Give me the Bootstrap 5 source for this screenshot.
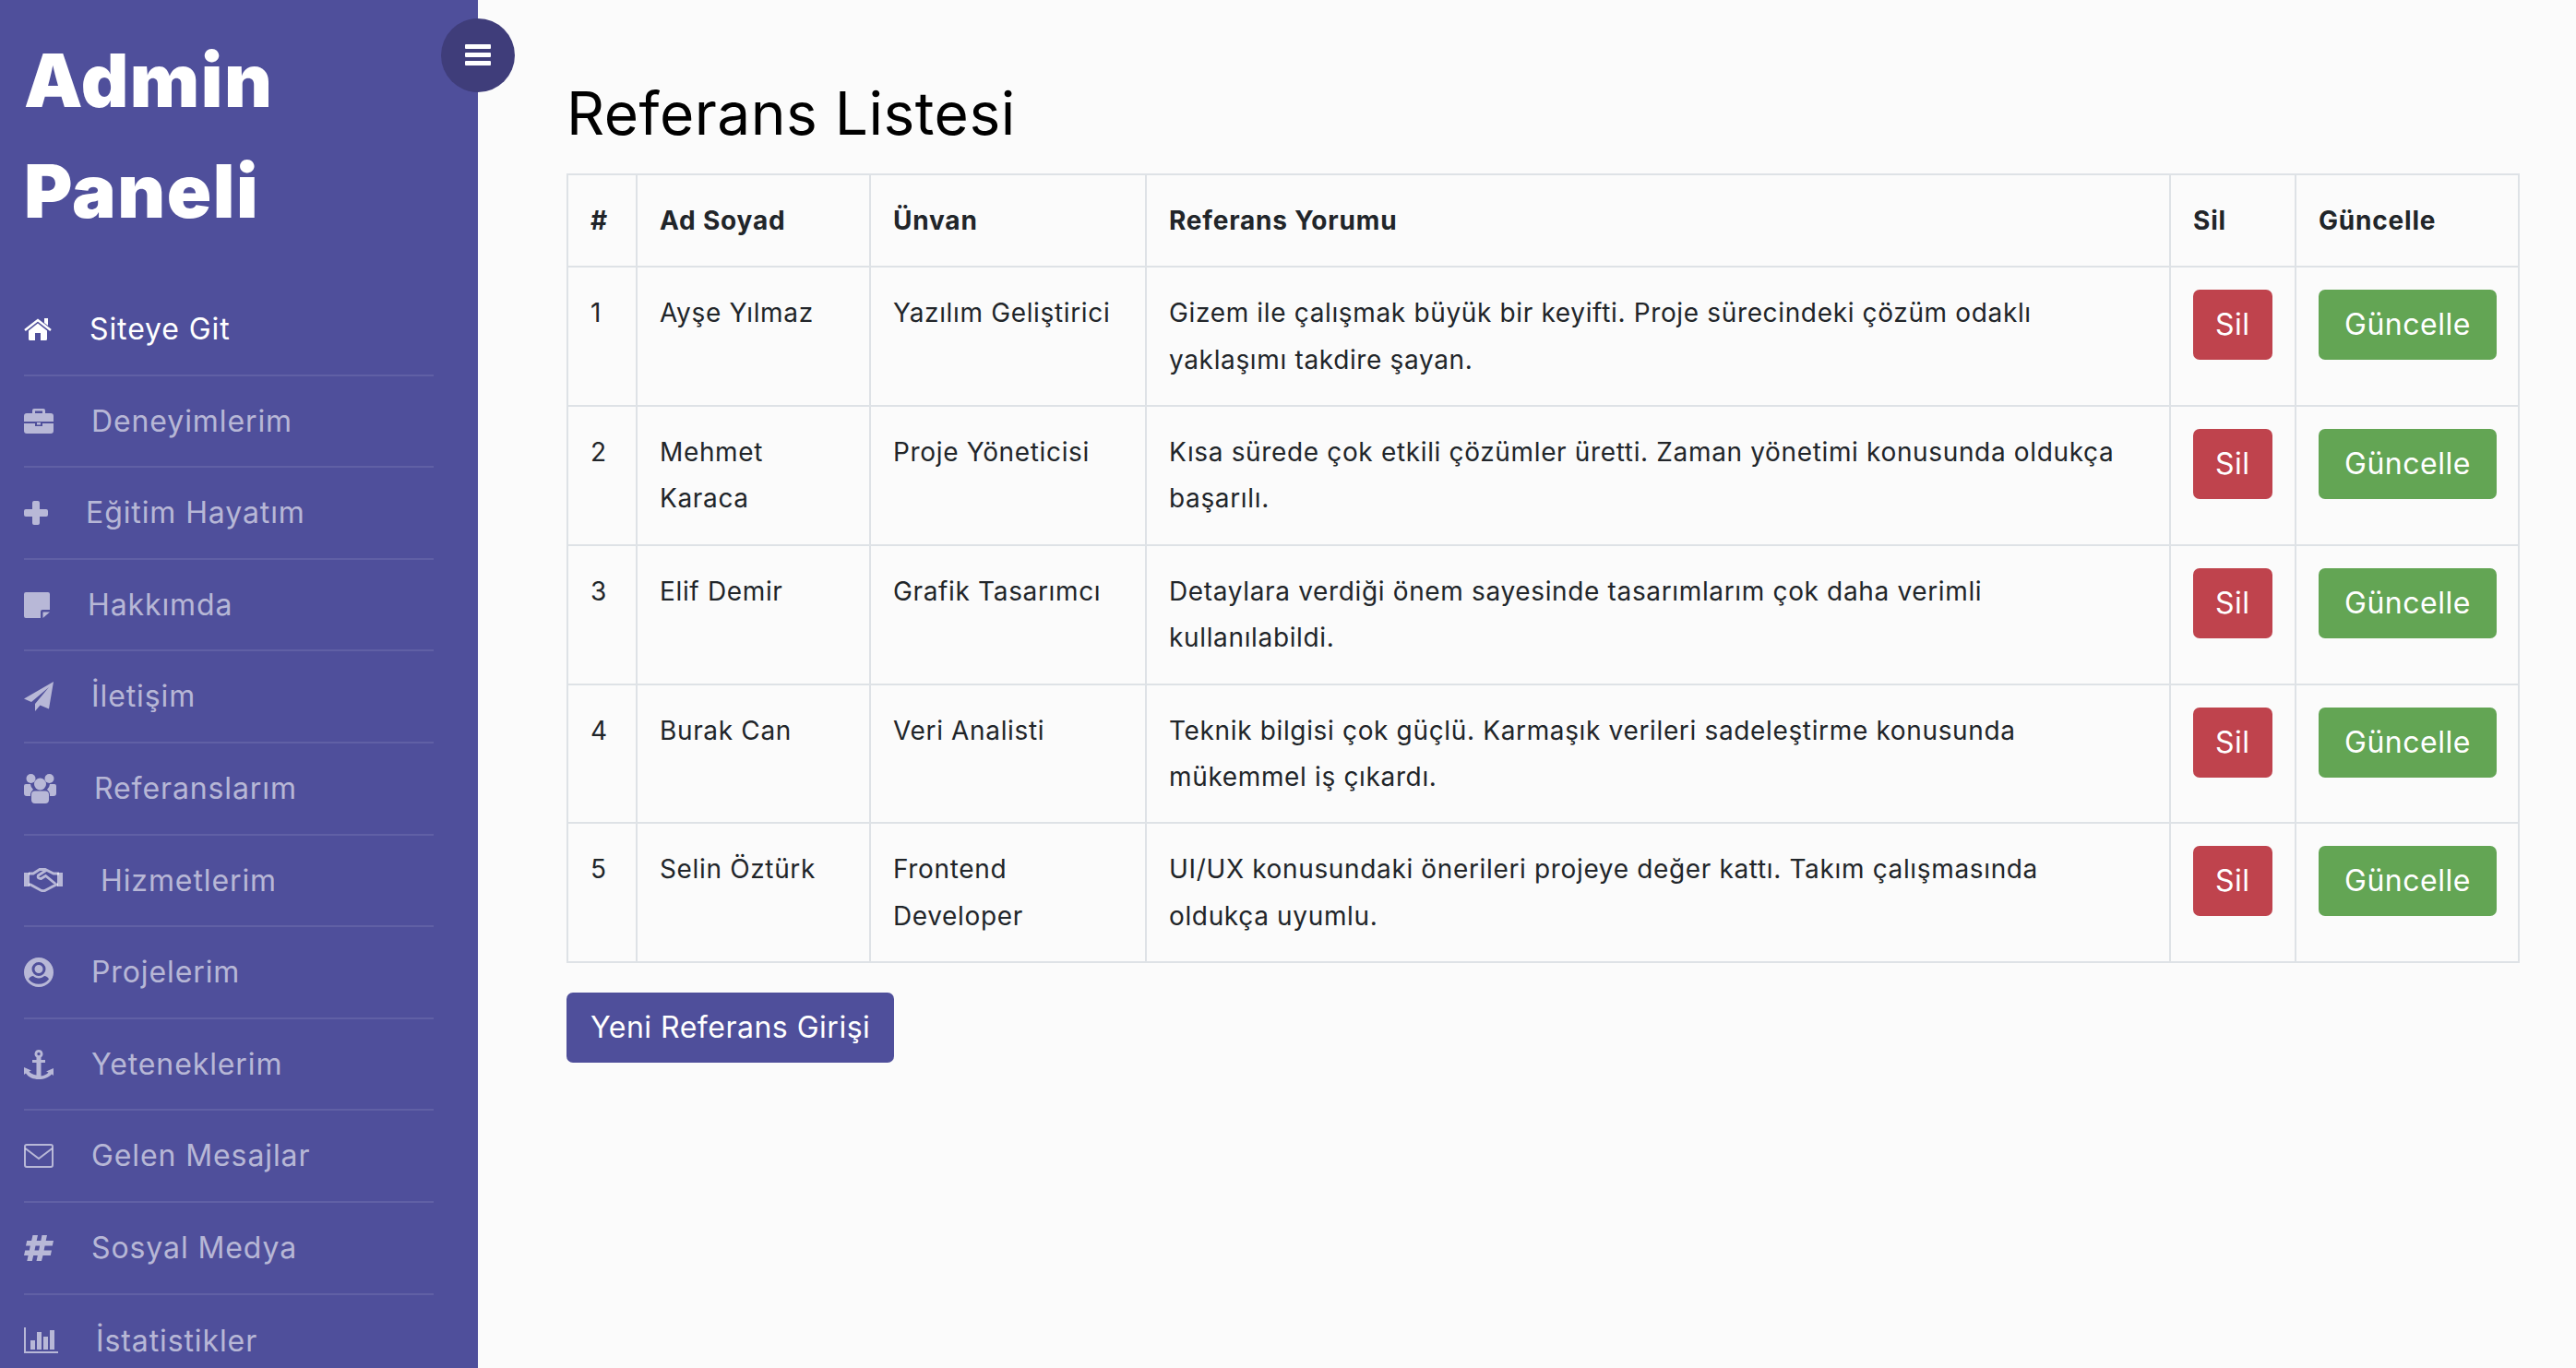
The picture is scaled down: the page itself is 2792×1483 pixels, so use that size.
<!DOCTYPE html>
<html lang="tr">
<head>
  <meta charset="UTF-8" />
  <title>Admin Paneli</title>
  <link href="https://cdn.jsdelivr.net/npm/bootstrap@5.3.0/dist/css/bootstrap.min.css" rel="stylesheet" />
  <style>
    html, body { height: 100%; }
    body { font-family: Inter, "Noto Sans", sans-serif; background: #fbfbfb; color: #212529; overflow: hidden; font-size: 28px; line-height: 1.8; }
    .yan-menu { width: 518px; flex: 0 0 518px; height: 100vh; background: #4f4f9b; padding: 20px 48px 0 26px; position: relative; }
    .menu-ic { height: 100vh; overflow: hidden; }
    .yan-baslik { font-size: 80px; font-weight: 900; line-height: 120px; color: #fff; margin: 7px 0 41px; letter-spacing: 1.5px; }
    .yan-link { display: flex; align-items: center; gap: 41px; height: 99.6px; color: rgba(255,255,255,.6); font-size: 32px; letter-spacing: .9px; text-decoration: none; border-bottom: 2px solid rgba(255,255,255,.1); }
    .yan-link.aktif { color: #fff; }
    .yan-link svg { fill: currentColor; flex: none; }
    .yan-link:last-child { border-bottom: 0; }
    .menu-dugme { position: absolute; left: 478px; top: 20px; width: 80px; height: 80px; border-radius: 50%; background: #3f3d7a; border: 0; display: flex; align-items: center; justify-content: center; padding: 0; }
    .icerik { flex: 1; padding: 85px 61px 0 96px; min-width: 0; }
    .sayfa-baslik { font-size: 64px; font-weight: 400; line-height: 1.2; letter-spacing: .5px; color: #000; margin-bottom: 26px; }
    .ref-tablo { --bs-table-bg: transparent; border-color: #dee2e6; table-layout: fixed; margin-bottom: 32px; letter-spacing: .65px; }
    .ref-tablo > :not(caption) > * > * { padding: 24px; border-width: 2px; }
    .ref-tablo th { font-weight: 700; letter-spacing: .8px; }
    .ref-btn { font-size: 32px; line-height: 48px; padding: 14px 26px; border: 0; border-radius: 7px; color: #fff; letter-spacing: .5px; }
    .btn-kirmizi { background: #bf434d; padding-inline: 24px; }
    .btn-yesil { background: #63a554; padding-inline: 28px; }
    .btn-mor { background: #4f4f9b; }
    .ref-btn:hover { color: #fff; }
  </style>
</head>
<body class="d-flex">

<aside class="yan-menu">
  <div class="menu-ic">
    <div class="yan-baslik">Admin<br>Paneli</div>
    <nav>
      <a class="yan-link aktif" href="#"><svg width="30" height="24" viewBox="0 0 30 24"><path d="M15 5.500 5 13.500V22.500a1.500 1.500 0 0 0 1.500 1.500H12V16h6v8h5.500a1.500 1.500 0 0 0 1.500-1.500V13.500z"/><path d="M22 0h4v8l-4-3z"/><path d="M1 13 15 2l14 11" fill="none" stroke="currentColor" stroke-width="2.500"/></svg>Siteye Git</a>
      <a class="yan-link" href="#"><svg width="32" height="27" viewBox="0 0 32 27"><path d="M11 0h10a2 2 0 0 1 2 2v3h6a3 3 0 0 1 3 3v6H0V8a3 3 0 0 1 3-3h6V2a2 2 0 0 1 2-2zm1 2.500V5h8V2.500z" fill-rule="evenodd"/><path d="M0 16h12v3h8v-3h12v8a3 3 0 0 1-3 3H3a3 3 0 0 1-3-3z"/><path d="M14 15h4v2.500h-4z"/></svg>Deneyimlerim</a>
      <a class="yan-link" href="#"><svg width="26" height="26" viewBox="0 0 26 26"><path d="M11 0h4a2 2 0 0 1 2 2v7h7a2 2 0 0 1 2 2v4a2 2 0 0 1-2 2h-7v7a2 2 0 0 1-2 2h-4a2 2 0 0 1-2-2v-7H2a2 2 0 0 1-2-2v-4a2 2 0 0 1 2-2h7V2a2 2 0 0 1 2-2z"/></svg>Eğitim Hayatım</a>
      <a class="yan-link" href="#"><svg width="28" height="28" viewBox="0 0 28 28"><path d="M2 0h24a2 2 0 0 1 2 2v17h-8a2 2 0 0 0-2 2v7H2a2 2 0 0 1-2-2V2a2 2 0 0 1 2-2z"/><path d="M20.500 21.500H28L20.500 28z"/></svg>Hakkımda</a>
      <a class="yan-link" href="#"><svg width="32" height="32" viewBox="0 0 32 32"><path d="M32 0 0 18.500l8 3.500L27 6 12 24v8l5.500-6.500L27 29.500z"/></svg>İletişim</a>
      <a class="yan-link" href="#"><svg width="35" height="32" viewBox="0 0 35 32"><circle cx="7.500" cy="5" r="5"/><circle cx="27.500" cy="5" r="5"/><path d="M2 11h5a9 9 0 0 0 3 6 8 8 0 0 0-3 7H3a3 3 0 0 1-3-3v-8a2 2 0 0 1 2-2zM28 11h5a2 2 0 0 1 2 2v8a3 3 0 0 1-3 3h-4a8 8 0 0 0-3-7 9 9 0 0 0 3-6z"/><circle cx="17.500" cy="11" r="6.500"/><path d="M12 18.500h11a4 4 0 0 1 4 4V28a4 4 0 0 1-4 4H12a4 4 0 0 1-4-4v-5.500a4 4 0 0 1 4-4z"/></svg>Referanslarım</a>
      <a class="yan-link" href="#"><svg width="42" height="26" viewBox="0 0 42 26"><path d="M0 5h6v15H0zM36 5h6v15h-6z"/><path d="M5 6h5l7-4.500h6L32 6h6M5 18h2l11 6q3 1.500 5.500 0L35 18h2M24 2.500 15.500 8q-1.500 3.500 3 3.500l5-3L34 17" fill="none" stroke="currentColor" stroke-width="2.800"/></svg>Hizmetlerim</a>
      <a class="yan-link" href="#"><svg width="32" height="32" viewBox="0 0 32 32"><path fill-rule="evenodd" d="M16 0a16 16 0 1 1 0 32 16 16 0 0 1 0-32zm0 5a7.500 7.500 0 1 0 0 15 7.500 7.500 0 0 0 0-15zm0 3a4.500 4.500 0 1 1 0 9 4.500 4.500 0 0 1 0-9zM5 23.500a14 14 0 0 0 22 0c-1-2-3-3.500-5-3.500-1.500 1.500-3.500 2.500-6 2.500s-4.500-1-6-2.500c-2 0-4 1.500-5 3.500z"/></svg>Projelerim</a>
      <a class="yan-link" href="#"><svg width="32" height="32" viewBox="0 0 32 32"><path fill-rule="evenodd" d="M16 0a4.500 4.500 0 0 1 2.500 8.200V11H23v3h-4.500v14.500c3.500-.4 6.500-2 8-4l-2.500-1 8-3.500v8l-2-1.500C27 30 22 32 16 32S5 30 2 25.500L0 27v-8l8 3.500-2.500 1c1.500 2 4.500 3.600 8 4V14H9v-3h4.500V8.200A4.500 4.500 0 0 1 16 0zm0 2.800a1.700 1.700 0 1 0 0 3.400 1.700 1.700 0 0 0 0-3.400z"/></svg>Yeteneklerim</a>
      <a class="yan-link" href="#"><svg width="32" height="26" viewBox="0 0 32 26"><rect x="1" y="1" width="30" height="24" rx="2" fill="none" stroke="currentColor" stroke-width="2"/><path d="M1.500 5 16 16 30.500 5" fill="none" stroke="currentColor" stroke-width="2"/></svg>Gelen Mesajlar</a>
      <a class="yan-link" href="#"><svg width="32" height="28" viewBox="0 0 32 28"><path fill-rule="evenodd" d="M9.500 0h5.500l-1.300 6h4.600L19.500 0H25l-1.300 6H32l-1.200 5.500h-8.200l-1 5H30L28.800 22h-8.300L19 28h-5.500l1.300-6h-4.600L8.800 28H3.300l1.300-6H0l1.200-5.500h4.600l1-5H2L3.200 6h4.900zm3 11.500-1 5h4.600l1-5z"/></svg>Sosyal Medya</a>
      <a class="yan-link" href="#"><svg width="37" height="28" viewBox="0 0 37 28"><path d="M0 0h2v26h35v2H0zM7 14h5v10H7zM14 5h5v19h-5zM21 10h5v14h-5zM28 3h5v21h-5z"/></svg>İstatistikler</a>
    </nav>
  </div>
  <button class="menu-dugme" type="button" aria-label="Menü"><svg width="28" height="26" viewBox="0 0 28 26" fill="#fff"><rect y="1" width="28" height="5" rx="1"/><rect y="10" width="28" height="5" rx="1"/><rect y="19" width="28" height="5" rx="1"/></svg></button>
</aside>

<main class="icerik">
  <h1 class="sayfa-baslik">Referans Listesi</h1>
  <table class="table table-bordered ref-tablo">
    <colgroup>
      <col style="width:75px"><col style="width:253px"><col style="width:299px"><col style="width:1110px"><col style="width:136px"><col>
    </colgroup>
    <thead>
      <tr><th>#</th><th>Ad Soyad</th><th>Ünvan</th><th>Referans Yorumu</th><th>Sil</th><th>Güncelle</th></tr>
    </thead>
    <tbody id="satirlar"></tbody>
  </table>
  <a href="#" class="btn ref-btn btn-mor">Yeni Referans Girişi</a>
</main>

<script>
  const referanslar = [
    ["Ayşe Yılmaz", "Yazılım Geliştirici", "Gizem ile çalışmak büyük bir keyifti. Proje sürecindeki çözüm odaklı<br>yaklaşımı takdire şayan."],
    ["Mehmet<br>Karaca", "Proje Yöneticisi", "Kısa sürede çok etkili çözümler üretti. Zaman yönetimi konusunda oldukça<br>başarılı."],
    ["Elif Demir", "Grafik Tasarımcı", "Detaylara verdiği önem sayesinde tasarımlarım çok daha verimli<br>kullanılabildi."],
    ["Burak Can", "Veri Analisti", "Teknik bilgisi çok güçlü. Karmaşık verileri sadeleştirme konusunda<br>mükemmel iş çıkardı."],
    ["Selin Öztürk", "Frontend<br>Developer", "UI/UX konusundaki önerileri projeye değer kattı. Takım çalışmasında<br>oldukça uyumlu."]
  ];
  document.getElementById("satirlar").innerHTML = referanslar.map((r, i) => `
    <tr>
      <td>${i + 1}</td><td>${r[0]}</td><td>${r[1]}</td><td>${r[2]}</td>
      <td><a href="#" class="btn ref-btn btn-kirmizi">Sil</a></td>
      <td><a href="#" class="btn ref-btn btn-yesil">Güncelle</a></td>
    </tr>`).join("");
</script>
<script src="https://cdn.jsdelivr.net/npm/bootstrap@5.3.0/dist/js/bootstrap.bundle.min.js"></script>
</body>
</html>
